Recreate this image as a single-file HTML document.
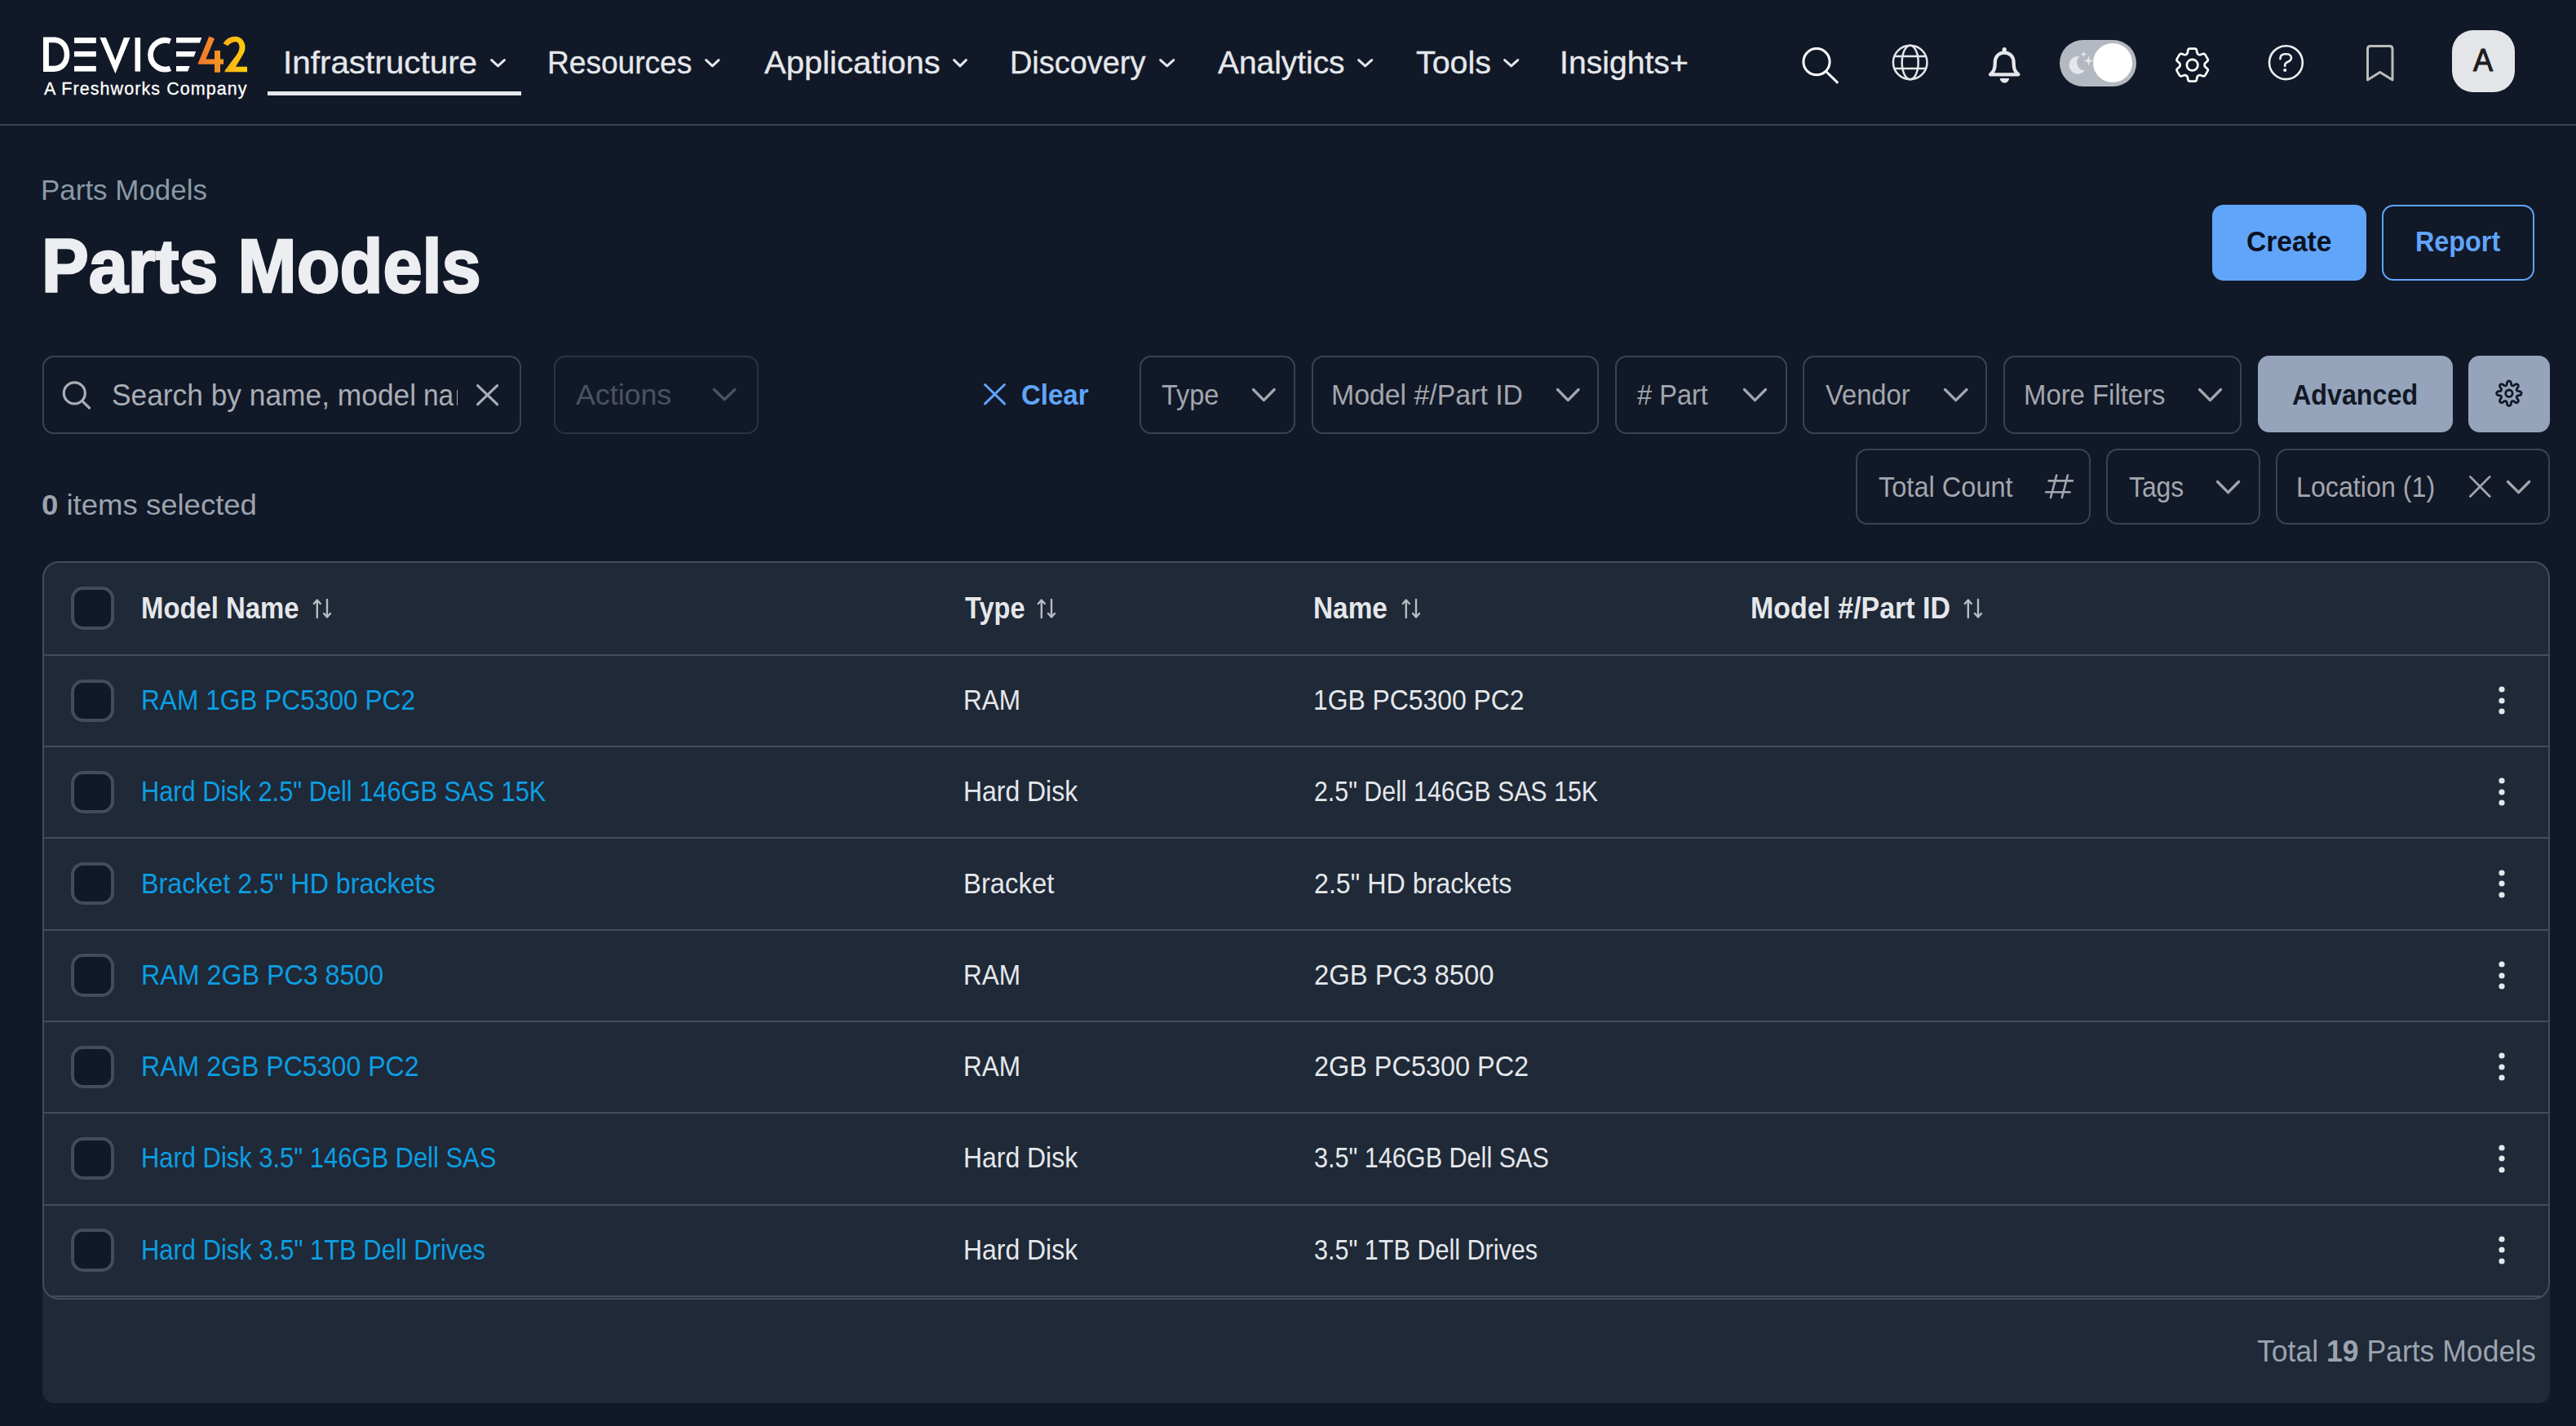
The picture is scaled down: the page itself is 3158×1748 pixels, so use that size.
<!DOCTYPE html>
<html><head><meta charset="utf-8"><title>Parts Models</title>
<style>
html,body{margin:0;padding:0;}
body{width:3158px;height:1748px;overflow:hidden;background:#111827;font-family:"Liberation Sans", sans-serif;position:relative;}
</style></head><body>
<div style="position:absolute;left:0px;top:152px;width:3158px;height:2px;background:#374151;border-radius:0px;"></div><svg style="position:absolute;left:0px;top:0px;overflow:visible;" width="320" height="100" viewBox="0 0 320 100">
<path fill="#fff" fill-rule="evenodd" d="M52.95,45.6 H66 C77,45.6 85.3,54 85.3,66.8 C85.3,79.5 77,88 66,88 H52.95 Z M59.9,52.2 H66 C73.5,52.2 78.7,58 78.7,66.8 C78.7,75.5 73.5,80.8 66,80.8 H59.9 Z"/>
<rect fill="#fff" x="91" y="46.1" width="26.8" height="6.8"/>
<rect fill="#fff" x="91" y="62.9" width="26.8" height="6.6"/>
<rect fill="#fff" x="91" y="80.9" width="26.8" height="6.7"/>
<path fill="#fff" d="M122.4,46.1 L129.8,46.1 L141.4,74 L151.9,46.1 L159.5,46.1 L141.4,90.2 Z"/>
<rect fill="#fff" x="165.5" y="46.1" width="6.6" height="41.5"/>
<path fill="none" stroke="#fff" stroke-width="6.8" d="M208.8,50.6 A17.8,17.8 0 1 0 208.8,83.8"/>
<path fill="#fff" d="M216,46 L247.3,46 L244.9,52.6 L216,52.6 Z M216,62.9 L240.1,62.9 L237.8,69.5 L216,69.5 Z M216,81 L232.7,81 L230.2,87.6 L216,87.6 Z"/>
<defs><linearGradient id="g4" x1="0" x2="1"><stop offset="0" stop-color="#f07530"/><stop offset="1" stop-color="#f59a1e"/></linearGradient>
<linearGradient id="g2" x1="0" x2="1"><stop offset="0" stop-color="#f9ac17"/><stop offset="1" stop-color="#fdd00b"/></linearGradient></defs>
<path fill="url(#g4)" d="M256.4,44.5 L263,47.2 L252.3,72.6 L263,72.6 L263,62.1 L270,62.1 L270,72.6 L274.1,72.6 L274.1,78.8 L270,78.8 L270,88.7 L263,88.7 L263,78.8 L242.8,78.8 L242.8,77.5 Z"/>
<path fill="url(#g2)" d="M273.7,53.4 C276.5,48 282,44.7 288.5,44.7 C295.5,44.7 300.5,50.5 300.5,57.8 C300.5,61.5 299.5,64.5 297.5,67.5 L289,81.7 H303 V88.3 H275.6 V86.5 L290.5,66.5 C292.5,63.5 293.5,60.5 293.5,57.8 C293.5,54 291.5,51.3 288.5,51.3 C285,51.3 281.5,53.5 279.5,56.3 Z"/>
</svg><svg style="position:absolute;left:601px;top:72.3px;overflow:visible;" width="19" height="12" viewBox="0 0 19 12"><path d="M1.6,1.6 L9.5,8.9 L17.4,1.6" fill="none" stroke="#e5e7eb" stroke-width="3" stroke-linecap="round" stroke-linejoin="round"/></svg><svg style="position:absolute;left:864px;top:72.3px;overflow:visible;" width="18.700000000000045" height="12" viewBox="0 0 18.700000000000045 12"><path d="M1.6,1.6 L9.350000000000023,8.9 L17.100000000000044,1.6" fill="none" stroke="#e5e7eb" stroke-width="3" stroke-linecap="round" stroke-linejoin="round"/></svg><svg style="position:absolute;left:1168px;top:72.3px;overflow:visible;" width="18" height="12" viewBox="0 0 18 12"><path d="M1.6,1.6 L9.0,8.9 L16.4,1.6" fill="none" stroke="#e5e7eb" stroke-width="3" stroke-linecap="round" stroke-linejoin="round"/></svg><svg style="position:absolute;left:1420.6px;top:72.3px;overflow:visible;" width="19.40000000000009" height="12" viewBox="0 0 19.40000000000009 12"><path d="M1.6,1.6 L9.700000000000045,8.9 L17.80000000000009,1.6" fill="none" stroke="#e5e7eb" stroke-width="3" stroke-linecap="round" stroke-linejoin="round"/></svg><svg style="position:absolute;left:1663.7px;top:72.3px;overflow:visible;" width="19.299999999999955" height="12" viewBox="0 0 19.299999999999955 12"><path d="M1.6,1.6 L9.649999999999977,8.9 L17.699999999999953,1.6" fill="none" stroke="#e5e7eb" stroke-width="3" stroke-linecap="round" stroke-linejoin="round"/></svg><svg style="position:absolute;left:1842.6px;top:72.3px;overflow:visible;" width="19.40000000000009" height="12" viewBox="0 0 19.40000000000009 12"><path d="M1.6,1.6 L9.700000000000045,8.9 L17.80000000000009,1.6" fill="none" stroke="#e5e7eb" stroke-width="3" stroke-linecap="round" stroke-linejoin="round"/></svg><div style="position:absolute;left:328px;top:112.3px;width:311px;height:4.700000000000003px;background:#e5e7eb;border-radius:0px;"></div><svg style="position:absolute;left:2200px;top:50px;overflow:visible;" width="60" height="60" viewBox="0 0 60 60"><circle cx="27" cy="25.7" r="16.1" fill="none" stroke="#fff" stroke-width="3"/><path d="M38.5,37.5 L52.3,50.9" stroke="#fff" stroke-width="3" stroke-linecap="round"/></svg><svg style="position:absolute;left:2310px;top:45px;overflow:visible;" width="64" height="64" viewBox="0 0 64 64"><g fill="none" stroke="#e5e7eb" stroke-width="2.5"><circle cx="31.7" cy="31.5" r="20.8"/><ellipse cx="31.7" cy="31.5" rx="10" ry="20.8"/><path d="M13,24.1 H50.5 M13,39.1 H50.5"/></g></svg><svg style="position:absolute;left:2430px;top:50px;overflow:visible;" width="56" height="60" viewBox="0 0 56 60"><path d="M27.2,14.6 C19.8,14.6 15.8,20 15.8,26.5 C15.8,34.5 14.4,37.5 10,41.3 H44.4 C40,37.5 38.6,34.5 38.6,26.5 C38.6,20 34.6,14.6 27.2,14.6 Z" fill="none" stroke="#e5e7eb" stroke-width="4.3" stroke-linejoin="round"/><path d="M24.6,14.5 V10.5 A2.6,2.6 0 0 1 29.8,10.5 V14.5 Z" fill="#e5e7eb"/><path d="M21.8,45.9 H33 A5.6,5.8 0 0 1 21.8,45.9 Z" fill="#e5e7eb"/></svg><div style="position:absolute;left:2524.8px;top:48.9px;width:93.89999999999964px;height:57.1px;background:#b4b9c1;border-radius:29px;"></div><div style="position:absolute;left:2565.9px;top:52.8px;width:48.2px;height:48.2px;border-radius:50%;background:#fff"></div><svg style="position:absolute;left:2530px;top:55px;overflow:visible;" width="40" height="45" viewBox="0 0 40 45"><path fill="#e5e7eb" d="M19.5,14.2 A10.8,10.8 0 1 0 25.8,31.6 A10,10 0 0 1 19.5,14.2 Z"/><path fill="#e5e7eb" d="M30.5,13.5 L32,18 L36.5,19.5 L32,21 L30.5,25.5 L29,21 L24.5,19.5 L29,18 Z"/><path fill="#e5e7eb" d="M24.3,7.4 L25.3,10.4 L28.3,11.4 L25.3,12.4 L24.3,15.4 L23.3,12.4 L20.3,11.4 L23.3,10.4 Z"/></svg><svg style="position:absolute;left:2660.7px;top:53.1px;overflow:visible;" width="54" height="54" viewBox="0 0 54 54"><g transform="scale(2.22)" fill="none" stroke="#fff" stroke-width="1.22" stroke-linejoin="round"><path d="M9.594 3.94c.09-.542.56-.94 1.11-.94h2.593c.55 0 1.02.398 1.11.94l.213 1.281c.063.374.313.686.645.87.074.04.147.083.22.127.325.196.72.257 1.075.124l1.217-.456a1.125 1.125 0 0 1 1.37.49l1.296 2.247a1.125 1.125 0 0 1-.26 1.431l-1.003.827c-.293.241-.438.613-.43.992a7.723 7.723 0 0 1 0 .255c-.008.378.137.75.43.991l1.004.827c.424.35.534.955.26 1.43l-1.298 2.247a1.125 1.125 0 0 1-1.369.491l-1.217-.456c-.355-.133-.75-.072-1.076.124a6.47 6.47 0 0 1-.22.128c-.331.183-.581.495-.644.869l-.213 1.281c-.09.543-.56.94-1.11.94h-2.594c-.55 0-1.019-.398-1.11-.94l-.213-1.281c-.062-.374-.312-.686-.644-.87a6.52 6.52 0 0 1-.22-.127c-.325-.196-.72-.257-1.076-.124l-1.217.456a1.125 1.125 0 0 1-1.369-.49l-1.297-2.247a1.125 1.125 0 0 1 .26-1.431l1.004-.827c.292-.24.437-.613.43-.991a6.932 6.932 0 0 1 0-.255c.007-.38-.138-.751-.43-.992l-1.004-.827a1.125 1.125 0 0 1-.26-1.43l1.297-2.247a1.125 1.125 0 0 1 1.37-.491l1.216.456c.356.133.751.072 1.076-.124.072-.044.146-.086.22-.128.332-.183.582-.495.644-.869l.214-1.28Z"/><circle cx="12" cy="12" r="3.05"/></g></svg><svg style="position:absolute;left:2775px;top:50px;overflow:visible;" width="56" height="56" viewBox="0 0 56 56"><g fill="none" stroke="#eeeff1" stroke-width="2.6" stroke-linecap="round"><circle cx="27.4" cy="26.7" r="20.4"/><path d="M20.4,22.2 C20.4,18.2 22.5,16.2 26.5,16.2 H28.5 C32,16.2 34,18.3 34,21 C34,23.2 32.5,24.6 30,25.7 C27.6,26.7 26.2,27.8 26.2,29.6 V31"/></g><circle cx="26.2" cy="36" r="2.1" fill="#eeeff1"/></svg><svg style="position:absolute;left:2895px;top:50px;overflow:visible;" width="46" height="56" viewBox="0 0 46 56"><path d="M7.5,48 V10 Q7.5,6.5 11,6.5 H34.5 Q38,6.5 38,10 V48 L22.75,38.5 Z" fill="none" stroke="#bcbcbc" stroke-width="3" stroke-linejoin="round"/></svg><div style="position:absolute;left:3005.8px;top:36.8px;width:77.29999999999973px;height:76.2px;background:#e4e5e9;border-radius:26px;"></div><div style="position:absolute;left:2711.9px;top:251px;width:188.9000000000001px;height:92.69999999999999px;background:#60a5fa;border-radius:14px;"></div><div style="position:absolute;left:2919.7px;top:251px;width:187.10000000000036px;height:92.69999999999999px;background:transparent;border:2px solid #60a5fa;box-sizing:border-box;border-radius:14px;"></div><div style="position:absolute;left:52.4px;top:436px;width:587.0px;height:96px;background:transparent;border:2px solid #3b4250;box-sizing:border-box;border-radius:14px;"></div><svg style="position:absolute;left:70px;top:460px;overflow:visible;" width="50" height="50" viewBox="0 0 50 50"><circle cx="21.3" cy="21.9" r="13" fill="none" stroke="#a9adb5" stroke-width="3.2"/><path d="M30.6,31.4 L39.5,40" stroke="#a9adb5" stroke-width="3.2" stroke-linecap="round"/></svg><div style="position:absolute;left:559.6px;top:478px;width:1.7999999999999545px;height:19px;background:#a3a7ae;border-radius:0px;"></div><svg style="position:absolute;left:583.9px;top:471.1px;overflow:visible;" width="27.200000000000045" height="26.299999999999955" viewBox="0 0 27.200000000000045 26.299999999999955"><path d="M1.6,1.6 L25.600000000000044,24.699999999999953 M25.600000000000044,1.6 L1.6,24.699999999999953" fill="none" stroke="#a9adb5" stroke-width="3.2" stroke-linecap="round"/></svg><div style="position:absolute;left:678.7px;top:436px;width:251.29999999999995px;height:96px;background:transparent;border:2px solid #2b3240;box-sizing:border-box;border-radius:14px;"></div><svg style="position:absolute;left:874.1px;top:476px;overflow:visible;" width="28.299999999999955" height="16" viewBox="0 0 28.299999999999955 16"><path d="M1.5,1.5 L14.149999999999977,13.7 L26.799999999999955,1.5" fill="none" stroke="#4b5261" stroke-width="3.3" stroke-linecap="round" stroke-linejoin="round"/></svg><svg style="position:absolute;left:1205.5px;top:470px;overflow:visible;" width="27.0" height="26.399999999999977" viewBox="0 0 27.0 26.399999999999977"><path d="M1.5,1.5 L25.5,24.899999999999977 M25.5,1.5 L1.5,24.899999999999977" fill="none" stroke="#60a5fa" stroke-width="3" stroke-linecap="round"/></svg><div style="position:absolute;left:1396.5px;top:436px;width:191.0px;height:96px;background:transparent;border:2px solid #3b4250;box-sizing:border-box;border-radius:14px;"></div><svg style="position:absolute;left:1535.0px;top:475.7px;overflow:visible;" width="28.700000000000045" height="16.900000000000034" viewBox="0 0 28.700000000000045 16.900000000000034"><path d="M1.5,1.5 L14.350000000000023,14.600000000000033 L27.200000000000045,1.5" fill="none" stroke="#a3a6ad" stroke-width="3.3" stroke-linecap="round" stroke-linejoin="round"/></svg><div style="position:absolute;left:1607.6px;top:436px;width:352.4000000000001px;height:96px;background:transparent;border:2px solid #3b4250;box-sizing:border-box;border-radius:14px;"></div><svg style="position:absolute;left:1907.8000000000002px;top:475.7px;overflow:visible;" width="28.59999999999991" height="16.900000000000034" viewBox="0 0 28.59999999999991 16.900000000000034"><path d="M1.5,1.5 L14.299999999999955,14.600000000000033 L27.09999999999991,1.5" fill="none" stroke="#a3a6ad" stroke-width="3.3" stroke-linecap="round" stroke-linejoin="round"/></svg><div style="position:absolute;left:1980px;top:436px;width:210.69999999999982px;height:96px;background:transparent;border:2px solid #3b4250;box-sizing:border-box;border-radius:14px;"></div><svg style="position:absolute;left:2137.4px;top:475.7px;overflow:visible;" width="29" height="16.900000000000034" viewBox="0 0 29 16.900000000000034"><path d="M1.5,1.5 L14.5,14.600000000000033 L27.5,1.5" fill="none" stroke="#a3a6ad" stroke-width="3.3" stroke-linecap="round" stroke-linejoin="round"/></svg><div style="position:absolute;left:2210px;top:436px;width:226px;height:96px;background:transparent;border:2px solid #3b4250;box-sizing:border-box;border-radius:14px;"></div><svg style="position:absolute;left:2383.4px;top:475.7px;overflow:visible;" width="29.5" height="16.900000000000034" viewBox="0 0 29.5 16.900000000000034"><path d="M1.5,1.5 L14.75,14.600000000000033 L28.0,1.5" fill="none" stroke="#a3a6ad" stroke-width="3.3" stroke-linecap="round" stroke-linejoin="round"/></svg><div style="position:absolute;left:2456px;top:436px;width:292px;height:96px;background:transparent;border:2px solid #3b4250;box-sizing:border-box;border-radius:14px;"></div><svg style="position:absolute;left:2695.4px;top:475.7px;overflow:visible;" width="29" height="16.900000000000034" viewBox="0 0 29 16.900000000000034"><path d="M1.5,1.5 L14.5,14.600000000000033 L27.5,1.5" fill="none" stroke="#a3a6ad" stroke-width="3.3" stroke-linecap="round" stroke-linejoin="round"/></svg><div style="position:absolute;left:2768px;top:436px;width:238.5px;height:94px;background:#95a4ba;border-radius:14px;"></div><div style="position:absolute;left:3026px;top:436px;width:100px;height:94px;background:#95a4ba;border-radius:14px;"></div><svg style="position:absolute;left:3050px;top:455px;overflow:visible;" width="55" height="55" viewBox="0 0 55 55"><g fill="none" stroke="#111827" stroke-width="2.8" stroke-linejoin="round"><path d="M25.90,12.00 L26.30,12.04 L26.69,12.15 L27.07,12.34 L27.43,12.62 L27.77,12.97 L28.08,13.44 L28.33,14.08 L28.41,15.41 L28.58,16.05 L28.76,16.53 L28.95,16.91 L29.14,17.22 L29.35,17.46 L29.57,17.65 L29.80,17.78 L30.06,17.85 L30.35,17.87 L30.67,17.85 L31.02,17.77 L31.43,17.63 L31.89,17.43 L32.47,17.09 L33.46,16.20 L34.09,15.93 L34.64,15.82 L35.13,15.80 L35.58,15.87 L35.98,16.00 L36.34,16.20 L36.65,16.45 L36.90,16.76 L37.10,17.12 L37.23,17.52 L37.30,17.97 L37.28,18.46 L37.17,19.01 L36.90,19.64 L36.01,20.63 L35.67,21.21 L35.47,21.67 L35.33,22.08 L35.25,22.43 L35.23,22.75 L35.25,23.04 L35.32,23.30 L35.45,23.53 L35.64,23.75 L35.88,23.96 L36.19,24.15 L36.57,24.34 L37.05,24.52 L37.69,24.69 L39.02,24.77 L39.66,25.02 L40.13,25.33 L40.48,25.67 L40.76,26.03 L40.95,26.41 L41.06,26.80 L41.10,27.20 L41.06,27.60 L40.95,27.99 L40.76,28.37 L40.48,28.73 L40.13,29.07 L39.66,29.38 L39.02,29.63 L37.69,29.71 L37.05,29.88 L36.57,30.06 L36.19,30.25 L35.88,30.44 L35.64,30.65 L35.45,30.87 L35.32,31.10 L35.25,31.36 L35.23,31.65 L35.25,31.97 L35.33,32.32 L35.47,32.73 L35.67,33.19 L36.01,33.77 L36.90,34.76 L37.17,35.39 L37.28,35.94 L37.30,36.43 L37.23,36.88 L37.10,37.28 L36.90,37.64 L36.65,37.95 L36.34,38.20 L35.98,38.40 L35.58,38.53 L35.13,38.60 L34.64,38.58 L34.09,38.47 L33.46,38.20 L32.47,37.31 L31.89,36.97 L31.43,36.77 L31.02,36.63 L30.67,36.55 L30.35,36.53 L30.06,36.55 L29.80,36.62 L29.57,36.75 L29.35,36.94 L29.14,37.18 L28.95,37.49 L28.76,37.87 L28.58,38.35 L28.41,38.99 L28.33,40.32 L28.08,40.96 L27.77,41.43 L27.43,41.78 L27.07,42.06 L26.69,42.25 L26.30,42.36 L25.90,42.40 L25.50,42.36 L25.11,42.25 L24.73,42.06 L24.37,41.78 L24.03,41.43 L23.72,40.96 L23.47,40.32 L23.39,38.99 L23.22,38.35 L23.04,37.87 L22.85,37.49 L22.66,37.18 L22.45,36.94 L22.23,36.75 L22.00,36.62 L21.74,36.55 L21.45,36.53 L21.13,36.55 L20.78,36.63 L20.37,36.77 L19.91,36.97 L19.33,37.31 L18.34,38.20 L17.71,38.47 L17.16,38.58 L16.67,38.60 L16.22,38.53 L15.82,38.40 L15.46,38.20 L15.15,37.95 L14.90,37.64 L14.70,37.28 L14.57,36.88 L14.50,36.43 L14.52,35.94 L14.63,35.39 L14.90,34.76 L15.79,33.77 L16.13,33.19 L16.33,32.73 L16.47,32.32 L16.55,31.97 L16.57,31.65 L16.55,31.36 L16.48,31.10 L16.35,30.87 L16.16,30.65 L15.92,30.44 L15.61,30.25 L15.23,30.06 L14.75,29.88 L14.11,29.71 L12.78,29.63 L12.14,29.38 L11.67,29.07 L11.32,28.73 L11.04,28.37 L10.85,27.99 L10.74,27.60 L10.70,27.20 L10.74,26.80 L10.85,26.41 L11.04,26.03 L11.32,25.67 L11.67,25.33 L12.14,25.02 L12.78,24.77 L14.11,24.69 L14.75,24.52 L15.23,24.34 L15.61,24.15 L15.92,23.96 L16.16,23.75 L16.35,23.53 L16.48,23.30 L16.55,23.04 L16.57,22.75 L16.55,22.43 L16.47,22.08 L16.33,21.67 L16.13,21.21 L15.79,20.63 L14.90,19.64 L14.63,19.01 L14.52,18.46 L14.50,17.97 L14.57,17.52 L14.70,17.12 L14.90,16.76 L15.15,16.45 L15.46,16.20 L15.82,16.00 L16.22,15.87 L16.67,15.80 L17.16,15.82 L17.71,15.93 L18.34,16.20 L19.33,17.09 L19.91,17.43 L20.37,17.63 L20.78,17.77 L21.13,17.85 L21.45,17.87 L21.74,17.85 L22.00,17.78 L22.23,17.65 L22.45,17.46 L22.66,17.22 L22.85,16.91 L23.04,16.53 L23.22,16.05 L23.39,15.41 L23.47,14.08 L23.72,13.44 L24.03,12.97 L24.37,12.62 L24.73,12.34 L25.11,12.15 L25.50,12.04 L25.90,12.00Z"/><circle cx="25.90" cy="27.20" r="4.2"/></g></svg><div style="position:absolute;left:2275.4px;top:549.5px;width:287.2999999999997px;height:93.79999999999995px;background:transparent;border:2px solid #3b4250;box-sizing:border-box;border-radius:14px;"></div><svg style="position:absolute;left:2500px;top:575px;overflow:visible;" width="50" height="45" viewBox="0 0 50 45"><g fill="none" stroke="#a3a6ad" stroke-width="2.6" stroke-linecap="round"><path d="M11.6,14.4 H41 M8.2,28.2 H37.6 M21.2,7.5 L14,35 M34.9,7.5 L27.8,35"/></g></svg><div style="position:absolute;left:2582.4px;top:549.5px;width:188.19999999999982px;height:93.79999999999995px;background:transparent;border:2px solid #3b4250;box-sizing:border-box;border-radius:14px;"></div><svg style="position:absolute;left:2717.4px;top:588.5px;overflow:visible;" width="29" height="17.0" viewBox="0 0 29 17.0"><path d="M1.5,1.5 L14.5,14.7 L27.5,1.5" fill="none" stroke="#a3a6ad" stroke-width="3.3" stroke-linecap="round" stroke-linejoin="round"/></svg><div style="position:absolute;left:2790.4px;top:549.5px;width:335.5999999999999px;height:93.79999999999995px;background:transparent;border:2px solid #3b4250;box-sizing:border-box;border-radius:14px;"></div><svg style="position:absolute;left:3027px;top:582.8px;overflow:visible;" width="26.59999999999991" height="26.90000000000009" viewBox="0 0 26.59999999999991 26.90000000000009"><path d="M1.35,1.35 L25.249999999999908,25.55000000000009 M25.249999999999908,1.35 L1.35,25.55000000000009" fill="none" stroke="#a3a6ad" stroke-width="2.7" stroke-linecap="round"/></svg><svg style="position:absolute;left:3073.2000000000003px;top:588.5px;overflow:visible;" width="29.199999999999818" height="17.0" viewBox="0 0 29.199999999999818 17.0"><path d="M1.5,1.5 L14.599999999999909,14.7 L27.699999999999818,1.5" fill="none" stroke="#a3a6ad" stroke-width="3.3" stroke-linecap="round" stroke-linejoin="round"/></svg><div style="position:absolute;left:52px;top:688px;width:3074px;height:1032px;background:#1f2937;border-radius:0px;border-radius:20px 20px 14px 14px;"></div><div style="position:absolute;left:52px;top:688px;width:3074px;height:905px;border:2px solid #454b59;box-sizing:border-box;border-radius:20px;"></div><div style="position:absolute;left:54px;top:802px;width:3070px;height:2px;background:#454b59;border-radius:0px;"></div><div style="position:absolute;left:54px;top:914px;width:3070px;height:2px;background:#454b59;border-radius:0px;"></div><div style="position:absolute;left:54px;top:1026px;width:3070px;height:2px;background:#454b59;border-radius:0px;"></div><div style="position:absolute;left:54px;top:1139px;width:3070px;height:2px;background:#454b59;border-radius:0px;"></div><div style="position:absolute;left:54px;top:1251px;width:3070px;height:2px;background:#454b59;border-radius:0px;"></div><div style="position:absolute;left:54px;top:1363px;width:3070px;height:2px;background:#454b59;border-radius:0px;"></div><div style="position:absolute;left:54px;top:1476px;width:3070px;height:2px;background:#454b59;border-radius:0px;"></div><div style="position:absolute;left:63px;top:1588px;width:3052px;height:2px;background:#454b59;border-radius:0px;"></div><div style="position:absolute;left:87px;top:719.4px;width:52.69999999999999px;height:52.200000000000045px;background:#111827;border:4px solid #444c5a;box-sizing:border-box;border-radius:15px;"></div><svg style="position:absolute;left:383.8px;top:733px;overflow:visible;" width="23" height="26" viewBox="0 0 23 26"><g fill="none" stroke="#b8bbc1" stroke-width="2.4" stroke-linecap="round" stroke-linejoin="round"><path d="M4.8,24 V3 M0.8,7 L4.8,2.5 L8.8,7"/><path d="M17,2 V23 M13,19 L17,23.5 L21,19"/></g></svg><svg style="position:absolute;left:1271.6px;top:733px;overflow:visible;" width="23" height="26" viewBox="0 0 23 26"><g fill="none" stroke="#b8bbc1" stroke-width="2.4" stroke-linecap="round" stroke-linejoin="round"><path d="M4.8,24 V3 M0.8,7 L4.8,2.5 L8.8,7"/><path d="M17,2 V23 M13,19 L17,23.5 L21,19"/></g></svg><svg style="position:absolute;left:1718.6px;top:733px;overflow:visible;" width="23" height="26" viewBox="0 0 23 26"><g fill="none" stroke="#b8bbc1" stroke-width="2.4" stroke-linecap="round" stroke-linejoin="round"><path d="M4.8,24 V3 M0.8,7 L4.8,2.5 L8.8,7"/><path d="M17,2 V23 M13,19 L17,23.5 L21,19"/></g></svg><svg style="position:absolute;left:2408px;top:733px;overflow:visible;" width="23" height="26" viewBox="0 0 23 26"><g fill="none" stroke="#b8bbc1" stroke-width="2.4" stroke-linecap="round" stroke-linejoin="round"><path d="M4.8,24 V3 M0.8,7 L4.8,2.5 L8.8,7"/><path d="M17,2 V23 M13,19 L17,23.5 L21,19"/></g></svg><div style="position:absolute;left:87px;top:832.55px;width:52.69999999999999px;height:52.200000000000045px;background:#111827;border:4px solid #444c5a;box-sizing:border-box;border-radius:15px;"></div><svg style="position:absolute;left:3056.7px;top:835.15px" width="20" height="20"><circle cx="10" cy="10" r="3.6" fill="#e5e7eb"/></svg><svg style="position:absolute;left:3056.7px;top:848.65px" width="20" height="20"><circle cx="10" cy="10" r="3.6" fill="#e5e7eb"/></svg><svg style="position:absolute;left:3056.7px;top:862.15px" width="20" height="20"><circle cx="10" cy="10" r="3.6" fill="#e5e7eb"/></svg><div style="position:absolute;left:87px;top:944.8499999999999px;width:52.69999999999999px;height:52.200000000000045px;background:#111827;border:4px solid #444c5a;box-sizing:border-box;border-radius:15px;"></div><svg style="position:absolute;left:3056.7px;top:947.4499999999999px" width="20" height="20"><circle cx="10" cy="10" r="3.6" fill="#e5e7eb"/></svg><svg style="position:absolute;left:3056.7px;top:960.9499999999999px" width="20" height="20"><circle cx="10" cy="10" r="3.6" fill="#e5e7eb"/></svg><svg style="position:absolute;left:3056.7px;top:974.4499999999999px" width="20" height="20"><circle cx="10" cy="10" r="3.6" fill="#e5e7eb"/></svg><div style="position:absolute;left:87px;top:1057.15px;width:52.69999999999999px;height:52.200000000000045px;background:#111827;border:4px solid #444c5a;box-sizing:border-box;border-radius:15px;"></div><svg style="position:absolute;left:3056.7px;top:1059.75px" width="20" height="20"><circle cx="10" cy="10" r="3.6" fill="#e5e7eb"/></svg><svg style="position:absolute;left:3056.7px;top:1073.25px" width="20" height="20"><circle cx="10" cy="10" r="3.6" fill="#e5e7eb"/></svg><svg style="position:absolute;left:3056.7px;top:1086.75px" width="20" height="20"><circle cx="10" cy="10" r="3.6" fill="#e5e7eb"/></svg><div style="position:absolute;left:87px;top:1169.4500000000003px;width:52.69999999999999px;height:52.200000000000045px;background:#111827;border:4px solid #444c5a;box-sizing:border-box;border-radius:15px;"></div><svg style="position:absolute;left:3056.7px;top:1172.0500000000002px" width="20" height="20"><circle cx="10" cy="10" r="3.6" fill="#e5e7eb"/></svg><svg style="position:absolute;left:3056.7px;top:1185.5500000000002px" width="20" height="20"><circle cx="10" cy="10" r="3.6" fill="#e5e7eb"/></svg><svg style="position:absolute;left:3056.7px;top:1199.0500000000002px" width="20" height="20"><circle cx="10" cy="10" r="3.6" fill="#e5e7eb"/></svg><div style="position:absolute;left:87px;top:1281.75px;width:52.69999999999999px;height:52.200000000000045px;background:#111827;border:4px solid #444c5a;box-sizing:border-box;border-radius:15px;"></div><svg style="position:absolute;left:3056.7px;top:1284.35px" width="20" height="20"><circle cx="10" cy="10" r="3.6" fill="#e5e7eb"/></svg><svg style="position:absolute;left:3056.7px;top:1297.85px" width="20" height="20"><circle cx="10" cy="10" r="3.6" fill="#e5e7eb"/></svg><svg style="position:absolute;left:3056.7px;top:1311.35px" width="20" height="20"><circle cx="10" cy="10" r="3.6" fill="#e5e7eb"/></svg><div style="position:absolute;left:87px;top:1394.0500000000002px;width:52.69999999999999px;height:52.200000000000045px;background:#111827;border:4px solid #444c5a;box-sizing:border-box;border-radius:15px;"></div><svg style="position:absolute;left:3056.7px;top:1396.65px" width="20" height="20"><circle cx="10" cy="10" r="3.6" fill="#e5e7eb"/></svg><svg style="position:absolute;left:3056.7px;top:1410.15px" width="20" height="20"><circle cx="10" cy="10" r="3.6" fill="#e5e7eb"/></svg><svg style="position:absolute;left:3056.7px;top:1423.65px" width="20" height="20"><circle cx="10" cy="10" r="3.6" fill="#e5e7eb"/></svg><div style="position:absolute;left:87px;top:1506.35px;width:52.69999999999999px;height:52.200000000000045px;background:#111827;border:4px solid #444c5a;box-sizing:border-box;border-radius:15px;"></div><svg style="position:absolute;left:3056.7px;top:1508.9499999999998px" width="20" height="20"><circle cx="10" cy="10" r="3.6" fill="#e5e7eb"/></svg><svg style="position:absolute;left:3056.7px;top:1522.4499999999998px" width="20" height="20"><circle cx="10" cy="10" r="3.6" fill="#e5e7eb"/></svg><svg style="position:absolute;left:3056.7px;top:1535.9499999999998px" width="20" height="20"><circle cx="10" cy="10" r="3.6" fill="#e5e7eb"/></svg>
<div style="position:absolute;left:53.60px;top:99.10px;font-size:21.5px;line-height:21.5px;font-weight:400;color:#ffffff;white-space:nowrap;transform:scaleX(0.9976);transform-origin:0 0;-webkit-text-stroke:0.3px #fff;letter-spacing:1.1px;">A Freshworks Company</div><div style="position:absolute;left:346.69px;top:57.08px;font-size:39px;line-height:39px;font-weight:400;color:#e5e7eb;white-space:nowrap;transform:scaleX(1.0363);transform-origin:0 0;-webkit-text-stroke:0.35px #e5e7eb;">Infrastructure</div><div style="position:absolute;left:671.15px;top:57.08px;font-size:39px;line-height:39px;font-weight:400;color:#e5e7eb;white-space:nowrap;transform:scaleX(0.9508);transform-origin:0 0;-webkit-text-stroke:0.35px #e5e7eb;">Resources</div><div style="position:absolute;left:936.50px;top:57.08px;font-size:39px;line-height:39px;font-weight:400;color:#e5e7eb;white-space:nowrap;transform:scaleX(1.0263);transform-origin:0 0;-webkit-text-stroke:0.35px #e5e7eb;">Applications</div><div style="position:absolute;left:1237.59px;top:57.08px;font-size:39px;line-height:39px;font-weight:400;color:#e5e7eb;white-space:nowrap;transform:scaleX(0.9716);transform-origin:0 0;-webkit-text-stroke:0.35px #e5e7eb;">Discovery</div><div style="position:absolute;left:1492.90px;top:57.08px;font-size:39px;line-height:39px;font-weight:400;color:#e5e7eb;white-space:nowrap;transform:scaleX(0.9968);transform-origin:0 0;-webkit-text-stroke:0.35px #e5e7eb;">Analytics</div><div style="position:absolute;left:1735.90px;top:57.08px;font-size:39px;line-height:39px;font-weight:400;color:#e5e7eb;white-space:nowrap;transform:scaleX(1.0089);transform-origin:0 0;-webkit-text-stroke:0.35px #e5e7eb;">Tools</div><div style="position:absolute;left:1911.99px;top:57.08px;font-size:39px;line-height:39px;font-weight:400;color:#e5e7eb;white-space:nowrap;transform:scaleX(1.0039);transform-origin:0 0;-webkit-text-stroke:0.35px #e5e7eb;">Insights+</div><div style="position:absolute;left:3032.07px;top:53.98px;font-size:39px;line-height:39px;font-weight:400;color:#1c1c1c;white-space:nowrap;transform:scaleX(0.9250);transform-origin:0 0;-webkit-text-stroke:1.1px #1c1c1c;">A</div><div style="position:absolute;left:50.00px;top:214.77px;font-size:35px;line-height:35px;font-weight:400;color:#8899a6;white-space:nowrap;transform:scaleX(0.9985);transform-origin:0 0;">Parts Models</div><div style="position:absolute;left:51.07px;top:279.03px;font-size:93.5px;line-height:93.5px;font-weight:700;color:#eceef1;white-space:nowrap;transform:scaleX(0.9257);transform-origin:0 0;-webkit-text-stroke:2.6px #eceef1;">Parts Models</div><div style="position:absolute;left:2754.06px;top:279.34px;font-size:35.5px;line-height:35.5px;font-weight:700;color:#0b1120;white-space:nowrap;transform:scaleX(0.9450);transform-origin:0 0;">Create</div><div style="position:absolute;left:2961.18px;top:279.34px;font-size:35.5px;line-height:35.5px;font-weight:700;color:#60a5fa;white-space:nowrap;transform:scaleX(0.9107);transform-origin:0 0;">Report</div><div style="position:absolute;left:136.84px;top:466.92px;font-size:36px;line-height:36px;font-weight:400;color:#a9adb5;white-space:nowrap;transform:scaleX(0.9811);transform-origin:0 0;">Search by name, model</div><div style="position:absolute;left:518.94px;top:466.92px;font-size:36px;line-height:36px;font-weight:400;color:#a9adb5;white-space:nowrap;transform:scaleX(0.9289);transform-origin:0 0;">na</div><div style="position:absolute;left:706.00px;top:466.17px;font-size:35px;line-height:35px;font-weight:400;color:#4b5261;white-space:nowrap;transform:scaleX(1.0211);transform-origin:0 0;">Actions</div><div style="position:absolute;left:1252.06px;top:466.17px;font-size:35px;line-height:35px;font-weight:700;color:#60a5fa;white-space:nowrap;transform:scaleX(0.9425);transform-origin:0 0;">Clear</div><div style="position:absolute;left:1423.50px;top:466.17px;font-size:35px;line-height:35px;font-weight:400;color:#a3a6ad;white-space:nowrap;transform:scaleX(0.9267);transform-origin:0 0;">Type</div><div style="position:absolute;left:1632.10px;top:466.17px;font-size:35px;line-height:35px;font-weight:400;color:#a3a6ad;white-space:nowrap;transform:scaleX(0.9665);transform-origin:0 0;">Model #/Part ID</div><div style="position:absolute;left:2007.40px;top:466.17px;font-size:35px;line-height:35px;font-weight:400;color:#a3a6ad;white-space:nowrap;transform:scaleX(0.9309);transform-origin:0 0;"># Part</div><div style="position:absolute;left:2237.70px;top:466.17px;font-size:35px;line-height:35px;font-weight:400;color:#a3a6ad;white-space:nowrap;transform:scaleX(0.9342);transform-origin:0 0;">Vendor</div><div style="position:absolute;left:2481.18px;top:466.17px;font-size:35px;line-height:35px;font-weight:400;color:#a3a6ad;white-space:nowrap;transform:scaleX(0.9392);transform-origin:0 0;">More Filters</div><div style="position:absolute;left:2810.08px;top:466.17px;font-size:35px;line-height:35px;font-weight:700;color:#111827;white-space:nowrap;transform:scaleX(0.9212);transform-origin:0 0;">Advanced</div><div style="position:absolute;left:2302.90px;top:578.87px;font-size:35px;line-height:35px;font-weight:400;color:#a3a6ad;white-space:nowrap;transform:scaleX(0.9299);transform-origin:0 0;">Total Count</div><div style="position:absolute;left:2609.50px;top:578.87px;font-size:35px;line-height:35px;font-weight:400;color:#a3a6ad;white-space:nowrap;transform:scaleX(0.9082);transform-origin:0 0;">Tags</div><div style="position:absolute;left:2814.74px;top:578.87px;font-size:35px;line-height:35px;font-weight:400;color:#a3a6ad;white-space:nowrap;transform:scaleX(0.9206);transform-origin:0 0;">Location (1)</div><div style="position:absolute;left:51.46px;top:600.57px;font-size:35px;line-height:35px;font-weight:400;color:#9ca3af;white-space:nowrap;transform:scaleX(1.0436);transform-origin:0 0;"><b>0</b> items selected</div><div style="position:absolute;left:172.67px;top:728.32px;font-size:36px;line-height:36px;font-weight:700;color:#e5e7eb;white-space:nowrap;transform:scaleX(0.9129);transform-origin:0 0;">Model Name</div><div style="position:absolute;left:1182.50px;top:728.32px;font-size:36px;line-height:36px;font-weight:700;color:#e5e7eb;white-space:nowrap;transform:scaleX(0.9037);transform-origin:0 0;">Type</div><div style="position:absolute;left:1610.45px;top:728.32px;font-size:36px;line-height:36px;font-weight:700;color:#e5e7eb;white-space:nowrap;transform:scaleX(0.9263);transform-origin:0 0;">Name</div><div style="position:absolute;left:2145.52px;top:728.32px;font-size:36px;line-height:36px;font-weight:700;color:#e5e7eb;white-space:nowrap;transform:scaleX(0.9416);transform-origin:0 0;">Model #/Part ID</div><div style="position:absolute;left:172.97px;top:840.94px;font-size:34.5px;line-height:34.5px;font-weight:400;color:#0b9ee3;white-space:nowrap;transform:scaleX(0.9174);transform-origin:0 0;">RAM 1GB PC5300 PC2</div><div style="position:absolute;left:1181.37px;top:840.94px;font-size:34.5px;line-height:34.5px;font-weight:400;color:#e5e7eb;white-space:nowrap;transform:scaleX(0.9153);transform-origin:0 0;">RAM</div><div style="position:absolute;left:1610.05px;top:840.94px;font-size:34.5px;line-height:34.5px;font-weight:400;color:#e5e7eb;white-space:nowrap;transform:scaleX(0.9235);transform-origin:0 0;">1GB PC5300 PC2</div><div style="position:absolute;left:173.02px;top:953.24px;font-size:34.5px;line-height:34.5px;font-weight:400;color:#0b9ee3;white-space:nowrap;transform:scaleX(0.8912);transform-origin:0 0;">Hard Disk 2.5" Dell 146GB SAS 15K</div><div style="position:absolute;left:1181.35px;top:953.24px;font-size:34.5px;line-height:34.5px;font-weight:400;color:#e5e7eb;white-space:nowrap;transform:scaleX(0.9253);transform-origin:0 0;">Hard Disk</div><div style="position:absolute;left:1611.02px;top:953.24px;font-size:34.5px;line-height:34.5px;font-weight:400;color:#e5e7eb;white-space:nowrap;transform:scaleX(0.8792);transform-origin:0 0;">2.5" Dell 146GB SAS 15K</div><div style="position:absolute;left:172.93px;top:1065.54px;font-size:34.5px;line-height:34.5px;font-weight:400;color:#0b9ee3;white-space:nowrap;transform:scaleX(0.9339);transform-origin:0 0;">Bracket 2.5" HD brackets</div><div style="position:absolute;left:1181.30px;top:1065.54px;font-size:34.5px;line-height:34.5px;font-weight:400;color:#e5e7eb;white-space:nowrap;transform:scaleX(0.9513);transform-origin:0 0;">Bracket</div><div style="position:absolute;left:1610.97px;top:1065.54px;font-size:34.5px;line-height:34.5px;font-weight:400;color:#e5e7eb;white-space:nowrap;transform:scaleX(0.9337);transform-origin:0 0;">2.5" HD brackets</div><div style="position:absolute;left:172.93px;top:1177.84px;font-size:34.5px;line-height:34.5px;font-weight:400;color:#0b9ee3;white-space:nowrap;transform:scaleX(0.9335);transform-origin:0 0;">RAM 2GB PC3 8500</div><div style="position:absolute;left:1181.37px;top:1177.84px;font-size:34.5px;line-height:34.5px;font-weight:400;color:#e5e7eb;white-space:nowrap;transform:scaleX(0.9153);transform-origin:0 0;">RAM</div><div style="position:absolute;left:1610.95px;top:1177.84px;font-size:34.5px;line-height:34.5px;font-weight:400;color:#e5e7eb;white-space:nowrap;transform:scaleX(0.9500);transform-origin:0 0;">2GB PC3 8500</div><div style="position:absolute;left:172.94px;top:1290.14px;font-size:34.5px;line-height:34.5px;font-weight:400;color:#0b9ee3;white-space:nowrap;transform:scaleX(0.9298);transform-origin:0 0;">RAM 2GB PC5300 PC2</div><div style="position:absolute;left:1181.37px;top:1290.14px;font-size:34.5px;line-height:34.5px;font-weight:400;color:#e5e7eb;white-space:nowrap;transform:scaleX(0.9153);transform-origin:0 0;">RAM</div><div style="position:absolute;left:1610.96px;top:1290.14px;font-size:34.5px;line-height:34.5px;font-weight:400;color:#e5e7eb;white-space:nowrap;transform:scaleX(0.9396);transform-origin:0 0;">2GB PC5300 PC2</div><div style="position:absolute;left:173.01px;top:1402.44px;font-size:34.5px;line-height:34.5px;font-weight:400;color:#0b9ee3;white-space:nowrap;transform:scaleX(0.8959);transform-origin:0 0;">Hard Disk 3.5" 146GB Dell SAS</div><div style="position:absolute;left:1181.35px;top:1402.44px;font-size:34.5px;line-height:34.5px;font-weight:400;color:#e5e7eb;white-space:nowrap;transform:scaleX(0.9253);transform-origin:0 0;">Hard Disk</div><div style="position:absolute;left:1611.01px;top:1402.44px;font-size:34.5px;line-height:34.5px;font-weight:400;color:#e5e7eb;white-space:nowrap;transform:scaleX(0.8861);transform-origin:0 0;">3.5" 146GB Dell SAS</div><div style="position:absolute;left:173.01px;top:1514.74px;font-size:34.5px;line-height:34.5px;font-weight:400;color:#0b9ee3;white-space:nowrap;transform:scaleX(0.8968);transform-origin:0 0;">Hard Disk 3.5" 1TB Dell Drives</div><div style="position:absolute;left:1181.35px;top:1514.74px;font-size:34.5px;line-height:34.5px;font-weight:400;color:#e5e7eb;white-space:nowrap;transform:scaleX(0.9253);transform-origin:0 0;">Hard Disk</div><div style="position:absolute;left:1611.01px;top:1514.74px;font-size:34.5px;line-height:34.5px;font-weight:400;color:#e5e7eb;white-space:nowrap;transform:scaleX(0.8860);transform-origin:0 0;">3.5" 1TB Dell Drives</div><div style="position:absolute;left:2767.30px;top:1638.82px;font-size:36px;line-height:36px;font-weight:400;color:#9ca3af;white-space:nowrap;transform:scaleX(0.9875);transform-origin:0 0;">Total <b>19</b> Parts Models</div>

</body></html>
